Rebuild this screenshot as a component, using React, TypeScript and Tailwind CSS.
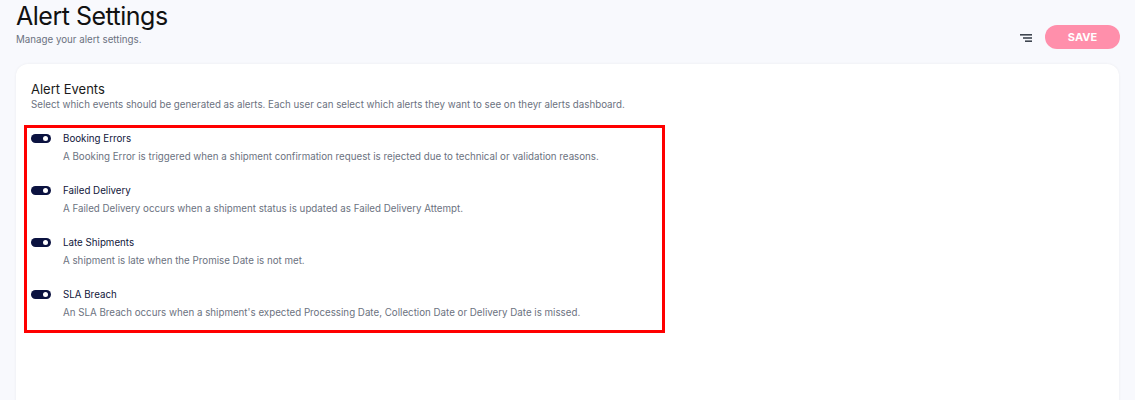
import React from "react";

const items = [
  {
    title: "Booking Errors",
    desc: "A Booking Error is triggered when a shipment confirmation request is rejected due to technical or validation reasons.",
  },
  {
    title: "Failed Delivery",
    desc: "A Failed Delivery occurs when a shipment status is updated as Failed Delivery Attempt.",
  },
  {
    title: "Late Shipments",
    desc: "A shipment is late when the Promise Date is not met.",
  },
  {
    title: "SLA Breach",
    desc: "An SLA Breach occurs when a shipment's expected Processing Date, Collection Date or Delivery Date is missed.",
  },
];

function Toggle() {
  return (
    <div className="relative w-[20px] h-[9px] rounded-full bg-[#0b1240] shrink-0">
      <div className="absolute right-[3px] top-[2px] w-[5px] h-[5px] rounded-full bg-white" />
    </div>
  );
}

export default function App() {
  return (
    <div
      className="min-h-[400px] h-[400px] overflow-hidden bg-[#f8f9fd] px-4"
      style={{ fontFamily: "Inter, 'Noto Sans', sans-serif" }}
    >
      <div className="flex justify-between items-start">
        <div>
          <h1 className="text-[25px] leading-[32px] tracking-[-0.5px] text-[#111111] mt-0 font-normal">
            Alert Settings
          </h1>
          <p className="text-[9.75px] leading-[14px] text-[#6b7280] mt-[1px]">Manage your alert settings.</p>
        </div>
        <div className="flex items-center gap-[12px] mt-[25px] -mr-[1px]">
          <svg width="14" height="12" viewBox="0 0 14 12" className="mt-[1px]">
            <rect x="1" y="2" width="12" height="1.6" fill="#3f4650" />
            <rect x="4" y="5.2" width="9" height="1.6" fill="#3f4650" />
            <rect x="6" y="8.4" width="7" height="1.6" fill="#3f4650" />
          </svg>
          <button className="w-[75px] h-[24px] rounded-full bg-[#ff8fab] text-white text-[11px] font-bold">
            SAVE
          </button>
        </div>
      </div>

      <div className="mt-[15px] bg-white rounded-[12px] shadow-[0_0_3px_rgba(0,0,0,0.06)] h-[400px] px-[15px] pt-[16px]">
        <h2 className="text-[13px] leading-[18px] text-[#1a1a1a]">Alert Events</h2>
        <p className="text-[9.75px] leading-[14px] text-[#6b7280] mt-0">
          Select which events should be generated as alerts. Each user can select which alerts they want to see on theyr alerts dashboard.
        </p>
        <div className="mt-[13px] -ml-[7px] w-[641px] border-[3px] border-[#ff0000] pl-[4px] pt-[3px] pb-[10px] flex flex-col gap-[19px]">
          {items.map((it) => (
            <div key={it.title} className="flex gap-[12px]">
              <div className="pt-[3px]">
                <Toggle />
              </div>
              <div>
                <div className="text-[9.75px] leading-[15px] text-[#10163a]">{it.title}</div>
                <div className="text-[9.75px] leading-[15px] text-[#6b7280] mt-[3px]">{it.desc}</div>
              </div>
            </div>
          ))}
        </div>
      </div>
    </div>
  );
}
